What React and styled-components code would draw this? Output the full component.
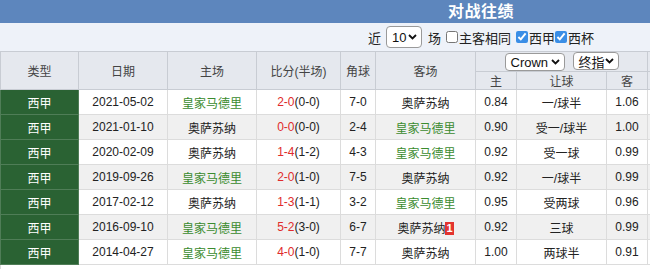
import styled, { createGlobalStyle } from "styled-components";

const GlobalStyle = createGlobalStyle`
  html, body {
    margin: 0;
    padding: 0;
    overflow: hidden;
    background: #fff;
  }
  body {
    font-family: "Liberation Sans", "Noto Sans CJK SC", sans-serif;
    color: #222;
  }
`;

const Wrap = styled.div`
  width: 962px;
`;

const TitleBar = styled.div`
  height: 23px;
  background: #5d86bd;
  color: #fff;
  font-size: 16px;
  font-weight: bold;
  line-height: 23px;
  text-align: center;
  letter-spacing: 0.5px;
`;

const FilterRow = styled.div`
  height: 28px;
  background: #eef2f9;
  display: flex;
  align-items: center;
  justify-content: center;
  font-size: 13px;
  color: #222;
`;

const Label = styled.span`
  display: inline-flex;
  align-items: center;
  margin: ${(p) => p.$m || "0"};
`;

const Check = styled.input`
  width: 12px;
  height: 12px;
  margin: 0 1px 0 0;
  accent-color: #3a8ee6;
`;

const SelectBox = styled.span`
  display: inline-flex;
  align-items: center;
  justify-content: space-between;
  box-sizing: border-box;
  width: ${(p) => p.$w}px;
  height: ${(p) => p.$h}px;
  padding: 0 4px 0 5px;
  background: #fff;
  border: 1px solid #9a9a9a;
  border-radius: 4px;
  font-size: 13px;
  color: #111;
  font-weight: normal;
`;

const Chevron = () => (
  <svg width="9" height="6" viewBox="0 0 9 6">
    <polyline points="1,1 4.5,4.5 8,1" fill="none" stroke="#111" strokeWidth="1.8" />
  </svg>
);

const Table = styled.table`
  width: 962px;
  table-layout: fixed;
  border-collapse: collapse;
  font-size: 12px;
`;

const Th = styled.th`
  background: #e5e8ee;
  color: #444;
  font-weight: normal;
  border: 1px solid #c8ccd3;
  padding: 0;
  height: ${(p) => p.$h || 17}px;
  text-align: center;
`;

const OddsHead = styled(Th)`
  & > span + span {
    margin-left: 8px;
  }
`;

const Td = styled.td`
  height: 24px;
  padding: 0;
  text-align: center;
  border: 1px solid #dcdcdc;
  background: ${(p) => (p.$alt ? "#f0f0f0" : "#fff")};
  color: ${(p) => (p.$green ? "#3a8b2e" : "#222")};
  white-space: nowrap;
`;

const TypeCell = styled(Td)`
  background: #2a6233;
  color: #fff;
  border-color: #4f7d57;
`;

const Red = styled.span`
  color: #e02b2b;
`;

const Badge = styled.span`
  display: inline-block;
  background: #e3342f;
  color: #fff;
  font-weight: bold;
  font-size: 11px;
  line-height: 13px;
  padding: 0 1px;
  vertical-align: 1px;
`;

const HOME = "皇家马德里";
const AWAY = "奥萨苏纳";

const rows = [
  { date: "2021-05-02", home: HOME, ft: "2-0", ht: "(0-0)", corner: "7-0", away: AWAY, h: "0.84", line: "一/球半", a: "1.06" },
  { date: "2021-01-10", home: AWAY, ft: "0-0", ht: "(0-0)", corner: "2-4", away: HOME, h: "0.90", line: "受一/球半", a: "1.00" },
  { date: "2020-02-09", home: AWAY, ft: "1-4", ht: "(1-2)", corner: "4-3", away: HOME, h: "0.92", line: "受一球", a: "0.99" },
  { date: "2019-09-26", home: HOME, ft: "2-0", ht: "(1-0)", corner: "7-5", away: AWAY, h: "0.92", line: "一/球半", a: "0.99" },
  { date: "2017-02-12", home: AWAY, ft: "1-3", ht: "(1-1)", corner: "3-2", away: HOME, h: "0.95", line: "受两球", a: "0.96" },
  { date: "2016-09-10", home: HOME, ft: "5-2", ht: "(3-0)", corner: "6-7", away: AWAY, red: 1, h: "0.92", line: "三球", a: "0.99" },
  { date: "2014-04-27", home: HOME, ft: "4-0", ht: "(1-0)", corner: "7-7", away: AWAY, h: "1.00", line: "两球半", a: "0.91" },
];

const widths = [78, 89, 89, 84, 35, 100, 41, 90, 41, 41, 90, 41, 48, 48, 47];

export default function App() {
  return (
    <Wrap>
      <GlobalStyle />
      <TitleBar>对战往绩</TitleBar>
      <FilterRow>
        <Label $m="0 5px 0 0">近</Label>
        <SelectBox $w={36} $h={22}>
          10 <Chevron />
        </SelectBox>
        <Label $m="0 0 0 6px">场</Label>
        <Label $m="0 0 0 5px">
          <Check type="checkbox" readOnly />
          主客相同
        </Label>
        <Label $m="0 0 0 5px">
          <Check type="checkbox" checked readOnly />
          西甲
        </Label>
        <Label>
          <Check type="checkbox" checked readOnly />
          西杯
        </Label>
      </FilterRow>
      <Table>
        <colgroup>
          {widths.map((w, i) => (
            <col key={i} style={{ width: w }} />
          ))}
        </colgroup>
        <thead>
          <tr>
            <Th rowSpan={2}>类型</Th>
            <Th rowSpan={2}>日期</Th>
            <Th rowSpan={2}>主场</Th>
            <Th rowSpan={2}>比分(半场)</Th>
            <Th rowSpan={2}>角球</Th>
            <Th rowSpan={2}>客场</Th>
            <OddsHead colSpan={3} $h={18}>
              <SelectBox $w={60} $h={18}>
                Crown <Chevron />
              </SelectBox>
              <SelectBox $w={46} $h={18}>
                终指 <Chevron />
              </SelectBox>
            </OddsHead>
            <Th colSpan={3}>大小</Th>
            <Th rowSpan={2}>胜负</Th>
            <Th rowSpan={2}>让球</Th>
            <Th rowSpan={2}>大小</Th>
          </tr>
          <tr>
            <Th>主</Th>
            <Th>让球</Th>
            <Th>客</Th>
            <Th>大</Th>
            <Th>盘口</Th>
            <Th>小</Th>
          </tr>
        </thead>
        <tbody>
          {rows.map((r, i) => {
            const alt = i % 2 === 1;
            return (
              <tr key={r.date}>
                <TypeCell>西甲</TypeCell>
                <Td $alt={alt}>{r.date}</Td>
                <Td $alt={alt} $green={r.home === HOME}>{r.home}</Td>
                <Td $alt={alt}>
                  <Red>{r.ft}</Red>
                  {r.ht}
                </Td>
                <Td $alt={alt}>{r.corner}</Td>
                <Td $alt={alt} $green={r.away === HOME}>
                  {r.away}
                  {r.red && <Badge>{r.red}</Badge>}
                </Td>
                <Td $alt={alt}>{r.h}</Td>
                <Td $alt={alt}>{r.line}</Td>
                <Td $alt={alt}>{r.a}</Td>
                <Td $alt={alt}>0.90</Td>
                <Td $alt={alt}>3</Td>
                <Td $alt={alt}>0.96</Td>
                <Td $alt={alt}>胜</Td>
                <Td $alt={alt}>赢</Td>
                <Td $alt={alt}>大</Td>
              </tr>
            );
          })}
          <tr>
            <Td colSpan={15}>&nbsp;</Td>
          </tr>
        </tbody>
      </Table>
    </Wrap>
  );
}
